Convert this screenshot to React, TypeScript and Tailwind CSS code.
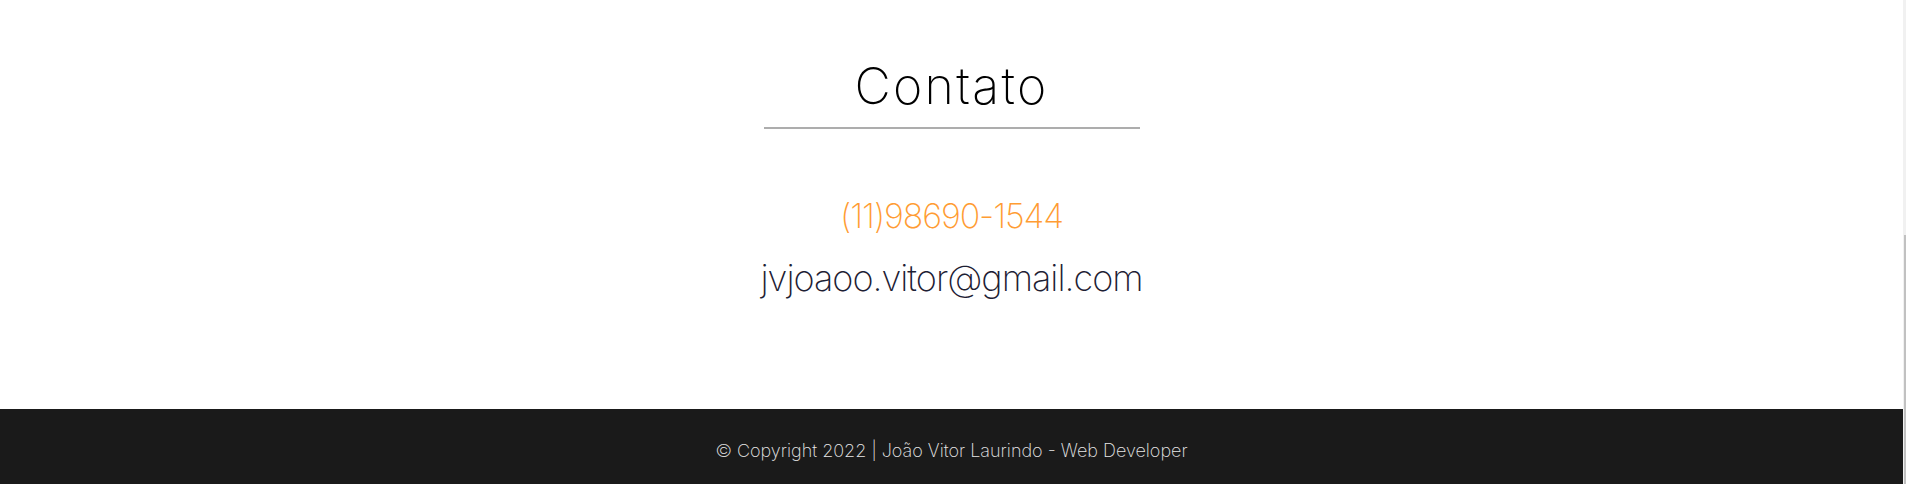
import React from "react";

const font = { fontFamily: "Inter, 'Noto Sans', sans-serif" };

const Contact = () => {
  return (
    <section className="h-[409px] bg-white flex flex-col items-center pt-[56px]">
      <h2 className="text-[50px] leading-[60px] font-extralight tracking-[2.3px] text-black">
        Contato
      </h2>
      <div className="w-[376px] h-[2px] bg-[#adadad] mt-[11px]" />
      <a className="mt-[65px] text-[34px] leading-[44px] font-extralight tracking-[-1.1px] text-[#ff9c33]">
        (11)98690-1544
      </a>
      <a className="mt-[16px] text-[36px] leading-[48px] font-extralight tracking-[-1px] text-[#1d2033]">
        jvjoaoo.vitor@gmail.com
      </a>
    </section>
  );
};

const Footer = () => (
  <footer className="h-[75px] bg-[#1a1a1a] flex items-center justify-center pt-[7px]">
    <p className="text-[18px] font-extralight text-[#e8e8e8]">
      © Copyright 2022 | João Vitor Laurindo - Web Developer
    </p>
  </footer>
);

export default function App() {
  return (
    <div className="flex w-full h-[484px] overflow-hidden" style={font}>
      <div className="flex-1 flex flex-col">
        <Contact />
        <Footer />
      </div>
      <div className="w-[3px] flex flex-col bg-[#f1f1f1]">
        <div className="h-[235px]" />
        <div className="flex-1 w-[2px] ml-auto bg-[#c1c1c1]" />
      </div>
    </div>
  );
}
